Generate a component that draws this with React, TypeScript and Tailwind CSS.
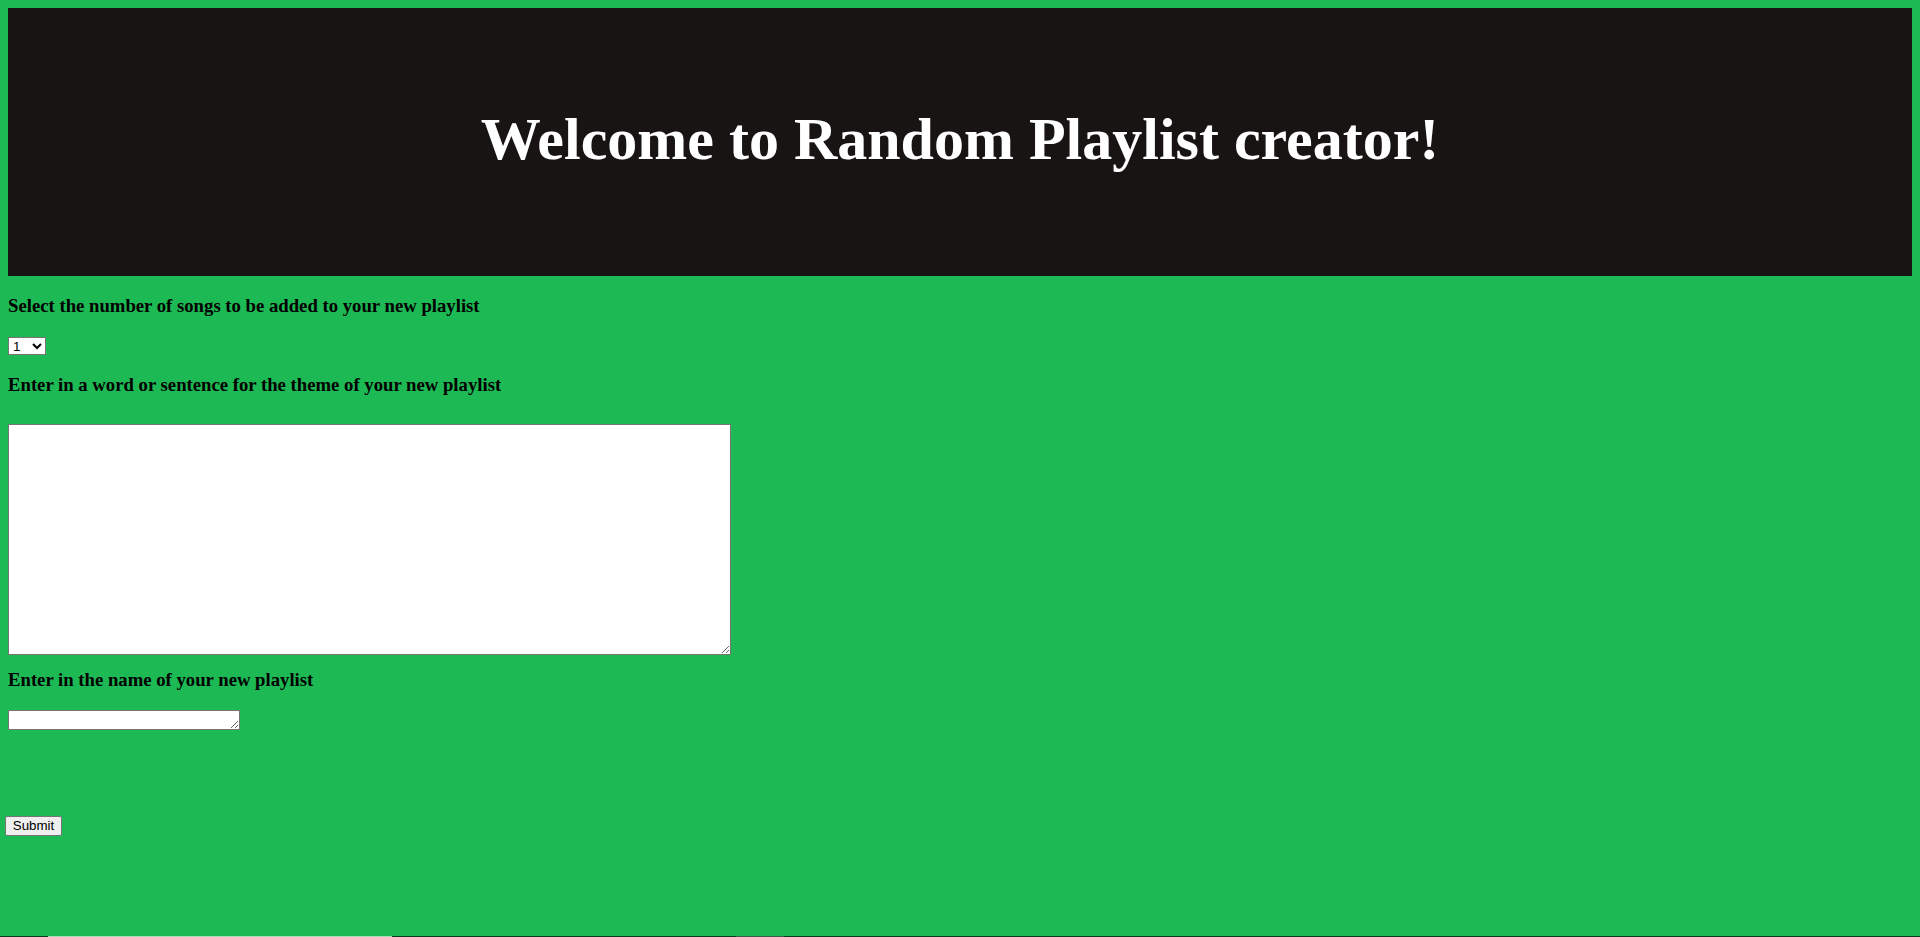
export default function App() {
  return (
    <div className="h-[937px] overflow-hidden bg-[#1db954] flex flex-col font-['Liberation_Serif',serif] text-black">
      {/* HEADER */}
      <header className="mx-2 mt-2 h-[268px] pb-[5px] bg-[#191414] flex items-center justify-center">
        <h1 className="text-[60px] leading-[normal] font-bold text-white">
          Welcome to Random Playlist creator!
        </h1>
      </header>

      {/* FORM */}
      <form className="px-2 flex flex-col items-start" onSubmit={(e) => e.preventDefault()}>
        <h3 className="mt-[19px] text-[18.72px] leading-[normal] font-bold">
          Select the number of songs to be added to your new playlist
        </h3>

        <select
          defaultValue="1"
          className="mt-[20px] h-[18px] w-[38px] bg-white border border-[#767676] text-[13.33px] leading-none font-['Liberation_Sans',sans-serif] text-black"
        >
          {[1, 2, 3, 4, 5, 6, 7, 8, 9, 10].map((n) => (
            <option key={n} value={n}>
              {n}
            </option>
          ))}
        </select>

        <h3 className="mt-[19px] text-[18.72px] leading-[normal] font-bold">
          Enter in a word or sentence for the theme of your new playlist
        </h3>

        <textarea className="mt-[28px] h-[231px] w-[723px] bg-white border border-[#767676] text-[13.33px] font-['Liberation_Mono',monospace]" />

        <h3 className="mt-[14px] text-[18.72px] leading-[normal] font-bold">
          Enter in the name of your new playlist
        </h3>

        <textarea className="mt-[19px] h-[20px] w-[232px] bg-white border border-[#767676] text-[13.33px] font-['Liberation_Mono',monospace]" />

        <button
          type="submit"
          className="mt-[86px] -ml-[3px] h-[20px] w-[57px] bg-[#efefef] border border-[#767676] rounded-[2px] text-[13.33px] leading-none font-['Liberation_Sans',sans-serif] text-black"
        >
          Submit
        </button>
      </form>

      {/* BOTTOM STRIP */}
      <div className="mt-auto h-px flex">
        <div className="w-[48px] bg-[#0b3a1a]" />
        <div className="w-[344px] bg-[#a9dcb7]" />
        <div className="w-[344px] bg-[#0b3a1a]" />
        <div className="w-[48px] bg-[#3f5a47]" />
        <div className="flex-1 bg-[#0b3a1a]" />
      </div>
    </div>
  );
}
